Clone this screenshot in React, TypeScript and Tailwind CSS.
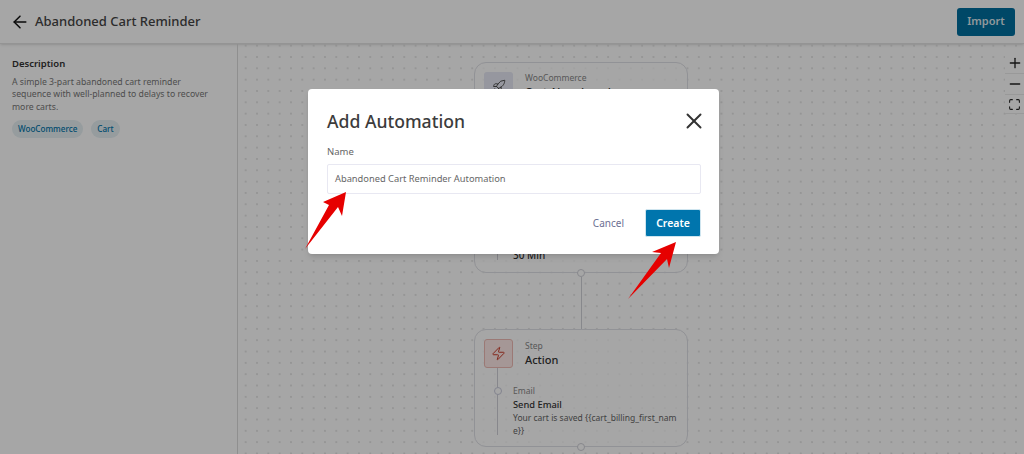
import React from 'react';
import { ArrowLeft, Maximize, Minus, Plus, Rocket, X, Zap } from 'lucide-react';

const font = 'font-["Noto_Sans","Open_Sans",sans-serif]';

const Arrow = ({ points, className }: { points: string; className: string }) => (
  <svg className={`absolute ${className}`} viewBox="0 0 60 70" width="60" height="70">
    <polygon points={points} fill="#e60000" />
  </svg>
);

export default function App() {
  return (
    <div className={`relative h-[454px] w-[1024px] overflow-hidden bg-white text-[#333] ${font}`}>
      <header className="flex h-11 items-center justify-between border-b border-[#e4e4e4] pl-2.5 pr-[9px] shadow-sm">
        <div className="flex items-center gap-[5px]">
          <ArrowLeft className="h-5 w-5 text-[#111]" strokeWidth={1.8} />
          <h1 className="text-[13px] font-medium text-[#444]">Abandoned Cart Reminder</h1>
        </div>
        <button className="h-[28px] w-[58px] rounded-[3px] bg-[#006f9f] text-[11px] font-semibold text-[#dfe9ee]">Import</button>
      </header>

      <div className="flex h-[410px]">
        <aside className="w-[238px] shrink-0 border-r border-[#dcdcdc] px-3 pt-[13px]">
          <h2 className="text-[9.5px] font-semibold leading-[14px] text-[#333]">Description</h2>
          <p className="mt-[5px] w-[208px] text-[8.7px] leading-[12.4px] text-[#777]">
            A simple 3-part abandoned cart reminder sequence with well-planned to delays to recover more carts.
          </p>
          <div className="mt-[7px] flex gap-2">
            <span className="flex h-[18px] items-center rounded-full bg-[#e6f0f3] px-1.5 text-[8.1px] font-medium text-[#0073aa]">WooCommerce</span>
            <span className="flex h-[18px] items-center rounded-full bg-[#e6f0f3] px-1.5 text-[8.1px] font-medium text-[#0073aa]">Cart</span>
          </div>
        </aside>

        <main className="relative flex-1 bg-[radial-gradient(circle,#c6c6c6_0.5px,transparent_0.8px)] bg-[size:11.33px_11.33px] bg-[position:2px_-4px]">
          <div className="ml-[236px] flex w-[214px] flex-col items-center pt-[18px]">
            <section className="h-[211px] w-[214px] shrink-0 rounded-xl border border-[#dfe0e6] bg-white/70 px-[9px] pt-[9px]">
              <div className="flex gap-3">
                <div className="flex h-[29px] w-[29px] items-center justify-center rounded-[3px] bg-[#e6e8f4]">
                  <Rocket className="h-[15px] w-[15px] text-[#444]" strokeWidth={1.5} />
                </div>
                <div>
                  <div className="text-[8.5px] leading-[12px] text-[#888]">WooCommerce</div>
                  <div className="text-[11px] font-medium leading-[15px] text-[#333]">Cart Abandoned</div>
                </div>
              </div>
              <div className="ml-[13px] mt-[138px] h-[21px] border-l border-[#cfd0d8] pl-[15px] pt-[8px]">
                <span className="block text-[10px] font-medium leading-[17px] text-[#333]">30 Min</span>
              </div>
            </section>
            <span className="-mt-1 h-2 w-2 shrink-0 rounded-full border border-[#d0d1d8] bg-white" />
            <span className="h-[52px] w-px shrink-0 bg-[#d0d1d8]" />
            <section className="h-[118px] w-[214px] shrink-0 rounded-xl border border-[#dfe0e6] bg-white/70 px-[9px] pt-[9px]">
              <div className="flex gap-3">
                <div className="flex h-[29px] w-[29px] items-center justify-center rounded-[3px] border border-[#eebbb4] bg-[#fde9e6]">
                  <Zap className="h-[15px] w-[15px] text-[#c7301f]" strokeWidth={1.5} />
                </div>
                <div className="pt-px">
                  <div className="text-[8.5px] leading-[12px] text-[#888]">Step</div>
                  <div className="text-[11px] font-medium leading-[15px] text-[#333]">Action</div>
                </div>
              </div>
              <div className="relative ml-[13px] h-[67px] border-l border-[#cfd0d8] pl-[15px] pt-[17px]">
                <span className="absolute -left-1 top-[19px] h-2 w-2 rounded-full border border-[#c9cbdc] bg-white" />
                <div className="text-[8.5px] leading-[12px] text-[#888]">Email</div>
                <div className="mt-px text-[9.3px] font-medium leading-[13px] text-[#333]">Send Email</div>
                <div className="mt-px w-[165px] break-all text-[8.5px] leading-[12.5px] text-[#666]">Your cart is saved {'{{cart_billing_first_name}}'}</div>
              </div>
            </section>
            <span className="-mt-1 h-2 w-2 shrink-0 rounded-full border border-[#d0d1d8] bg-white" />
          </div>

          <div className="absolute right-0 top-[9px] flex w-[19px] flex-col items-center bg-white">
            <span className="flex h-5 items-center"><Plus className="h-4 w-4 text-[#222]" strokeWidth={2} /></span>
            <span className="h-px w-full bg-[#ececec]" />
            <span className="flex h-5 items-center"><Minus className="h-4 w-4 text-[#222]" strokeWidth={2} /></span>
            <span className="h-px w-full bg-[#ececec]" />
            <span className="flex h-[18px] items-center"><Maximize className="h-[13px] w-[13px] text-[#222]" strokeWidth={2} /></span>
            <span className="h-px w-full bg-[#ececec]" />
          </div>
        </main>
      </div>

      {/* backdrop + modal */}
      <div className="absolute inset-0 bg-black/35" />
      <div className="absolute left-[308px] top-[89px] h-[165px] w-[411px] rounded-[4px] bg-white pl-[19px] pr-[18px] pt-[18px] shadow-md">
        <div className="flex h-[28px] items-center justify-between">
          <h3 className="text-[17.6px] font-medium leading-[28px] text-[#3c3c3c]">Add Automation</h3>
          <X className="-mr-[6px] h-[26px] w-[26px] text-[#333]" strokeWidth={1.8} />
        </div>
        <label className="mt-[10px] block text-[9.5px] leading-[13px] text-[#666]">Name</label>
        <div className="mt-[6px] flex h-[30px] w-[374px] items-center rounded-[2px] border border-[#e8e8f2] px-[7px] text-[9.3px] text-[#666]">
          Abandoned Cart Reminder Automation
        </div>
        <div className="mt-[15px] flex items-center justify-end gap-[21px]">
          <button className="text-[10px] text-[#6c6f93]">Cancel</button>
          <button className="h-[28px] w-[56px] rounded-[2px] border border-[#cfe5ef] bg-[#0075ad] pt-px text-[10.5px] font-semibold text-white">Create</button>
        </div>
      </div>

      <Arrow className="left-[300px] top-[186px]" points="46,6 42,30 38,21 5,63 29,19 23,16" />
      <Arrow className="left-[624px] top-[238px]" points="52,4 45,30 43,21 4,61 37,15 28,14" />
    </div>
  );
}
